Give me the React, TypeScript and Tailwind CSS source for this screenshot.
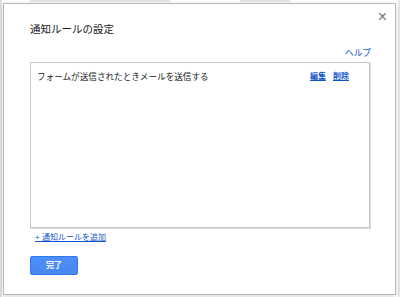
export default function App() {
  return (
    <div
      className="relative h-[297px] w-[400px] overflow-hidden bg-white"
      style={{ fontFamily: '"Liberation Sans", "Noto Sans CJK JP", sans-serif' }}
    >
      {/* faint page behind the dialog */}
      <div className="absolute left-0 top-0 h-full w-[2px] bg-[#e0e0e0]" />
      <div className="absolute left-[30px] top-0 h-[2px] w-[140px] bg-[#e4e4e4]" />
      <div className="absolute left-[240px] top-0 h-[2px] w-[50px] bg-[#e4e4e4]" />
      <div className="absolute right-0 top-0 h-full w-[2px] bg-[#e8e8e8]" />

      <div className="absolute left-[3px] top-[3px] flex h-[292px] w-[393px] flex-col border border-[#b8b8b8] bg-white px-[26px] shadow-[0_2px_6px_rgba(0,0,0,0.15)]">
        <button className="absolute right-[8px] top-[5px] text-[16px] leading-none text-[#777]">
          ×
        </button>
        <h1 className="mt-[18px] text-[10.5px] leading-[14px] text-[#222]">通知ルールの設定</h1>
        <div className="mt-[11px] flex justify-end">
          <a className="mr-[-2px] text-[8.7px] leading-[12px] text-[#1155cc]">ヘルプ</a>
        </div>
        <div className="mt-[3px] h-[166px] w-[340px] border border-[#c6c6c6] shadow-[1px_1px_0_#dcdcdc]">
          <div className="flex items-center justify-between pl-[6px] pr-[20px] pt-[8px]">
            <span className="text-[8.6px] leading-[12px] text-[#222]">
              フォームが送信されたときメールを送信する
            </span>
            <span className="flex gap-[7px] text-[8px] font-bold leading-[12px] text-[#1155cc]">
              <a className="underline">編集</a>
              <a className="underline">削除</a>
            </span>
          </div>
        </div>
        <a className="ml-[5px] mt-[4px] text-[8px] leading-[12px] text-[#1155cc] underline">
          + 通知ルールを追加
        </a>
        <button className="mt-[12px] h-[19px] w-[48px] rounded-[2px] border border-[#3079ed] bg-gradient-to-b from-[#4d90fe] to-[#4787ed] text-[8px] font-bold text-white">
          完了
        </button>
      </div>
    </div>
  );
}
